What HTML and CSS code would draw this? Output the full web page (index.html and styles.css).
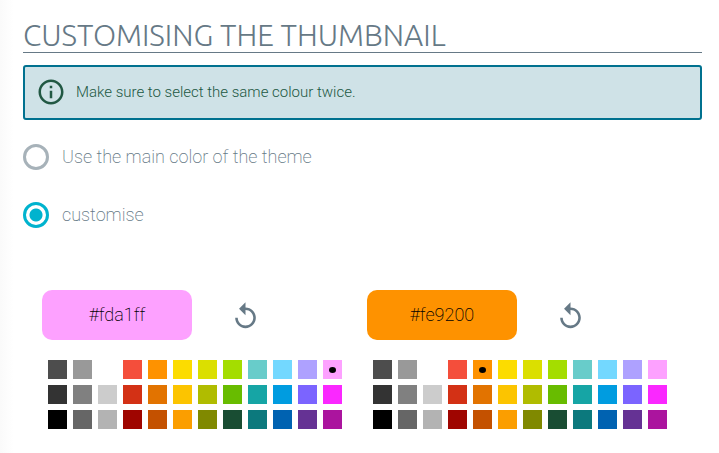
FILE: index.html
```html
<!DOCTYPE html>
<html lang="en">
<head>
    <meta charset="UTF-8">
    <meta name="viewport" content="width=device-width, initial-scale=1.0">
    <title>Customising the thumbnail</title>
    <link rel="stylesheet" href="styles.css">
</head>
<body>

    <main class="page">
        <h1 class="title">CUSTOMISING THE THUMBNAIL</h1>

        <div class="alert" role="note">
            <svg class="alert-icon" viewBox="0 0 24 24" aria-hidden="true">
                <path d="M11 7h2v2h-2zm0 4h2v6h-2zm1-9C6.48 2 2 6.48 2 12s4.48 10 10 10 10-4.48 10-10S17.52 2 12 2zm0 18c-4.41 0-8-3.59-8-8s3.59-8 8-8 8 3.59 8 8-3.59 8-8 8z"/>
            </svg>
            <p>Make sure to select the same colour twice.</p>
        </div>

        <form id="thumbnailForm">
            <div class="options">
                <label class="option" for="mainColor">
                    <input type="radio" id="mainColor" name="mode" value="theme">
                    <span>Use the main color of the theme</span>
                </label>
                <label class="option" for="customColor">
                    <input type="radio" id="customColor" name="mode" value="custom" checked>
                    <span>customise</span>
                </label>
            </div>

            <div class="pickers">
                <div class="picker" data-default="#fda1ff">
                    <div class="picker-head">
                        <output class="preview">#fda1ff</output>
                        <button type="button" class="reset" aria-label="Reset colour">
                            <svg viewBox="0 0 24 24" aria-hidden="true">
                                <path d="M12 5V1L7 6l5 5V7c3.31 0 6 2.69 6 6s-2.69 6-6 6-6-2.69-6-6H4c0 4.42 3.58 8 8 8s8-3.58 8-8-3.58-8-8-8z"/>
                            </svg>
                        </button>
                    </div>
                    <div class="swatches"></div>
                </div>
                <div class="picker" data-default="#fe9200">
                    <div class="picker-head">
                        <output class="preview">#fe9200</output>
                        <button type="button" class="reset" aria-label="Reset colour">
                            <svg viewBox="0 0 24 24" aria-hidden="true">
                                <path d="M12 5V1L7 6l5 5V7c3.31 0 6 2.69 6 6s-2.69 6-6 6-6-2.69-6-6H4c0 4.42 3.58 8 8 8s8-3.58 8-8-3.58-8-8-8z"/>
                            </svg>
                        </button>
                    </div>
                    <div class="swatches"></div>
                </div>
            </div>
        </form>
    </main>

    <script>
        // Palette, one line per row of swatches
        const colors = [
            '#4d4d4d', '#999999', '#ffffff', '#f44e3b', '#fe9200', '#fcdc00', '#dbdf00', '#a4dd00', '#68ccca', '#73d8ff', '#aea1ff', '#fda1ff',
            '#333333', '#808080', '#cccccc', '#d33115', '#e27300', '#fcc400', '#b0bc00', '#68bc00', '#16a5a5', '#009ce0', '#7b64ff', '#fa28ff',
            '#000000', '#666666', '#b3b3b3', '#9f0500', '#c45100', '#fb9e00', '#808900', '#194d33', '#0c797d', '#0062b1', '#653294', '#ab149e'
        ];

        document.querySelectorAll('.picker').forEach(function(picker) {
            const swatches = picker.querySelector('.swatches');
            const preview = picker.querySelector('.preview');

            colors.forEach(function(color) {
                const button = document.createElement('button');
                button.type = 'button';
                button.className = 'swatch';
                button.dataset.color = color;
                button.style.backgroundColor = color;
                button.setAttribute('aria-label', color);
                button.addEventListener('click', function() {
                    selectColor(color);
                });
                swatches.appendChild(button);
            });

            function selectColor(color) {
                preview.textContent = color;
                preview.style.backgroundColor = color;
                swatches.querySelectorAll('.swatch').forEach(function(swatch) {
                    swatch.classList.toggle('selected', swatch.dataset.color === color);
                });
            }

            picker.querySelector('.reset').addEventListener('click', function() {
                selectColor(picker.dataset.default);
            });

            selectColor(picker.dataset.default);
        });
    </script>

</body>
</html>
```
FILE: styles.css
```css
/* General reset */
* {
    margin: 0;
    padding: 0;
    box-sizing: border-box;
}

body {
    min-height: 100vh;
    font-family: Roboto, "Liberation Sans", sans-serif;
    font-weight: 200;
    color: #667986;
    background: linear-gradient(to right, #fafafa, #ffffff 14px);
}

.page {
    padding: 19px 17px 20px 23px;
}

.title {
    font-family: Ubuntu, "Open Sans", sans-serif;
    font-size: 30px;
    font-weight: 300;
    line-height: 33px;
    border-bottom: 1px solid #667986;
    margin-bottom: 12px;
}

.alert {
    display: flex;
    align-items: center;
    gap: 10px;
    padding: 10px 11px 11px;
    border: 2px solid #00718f;
    border-radius: 3px;
    background-color: #cfe2e7;
    color: #215843;
    font-size: 15px;
    font-weight: 300;
    line-height: 20px;
}

.alert-icon {
    width: 30px;
    height: 30px;
    fill: currentColor;
}

.options {
    display: flex;
    flex-direction: column;
    align-items: flex-start;
    gap: 32px;
    padding: 24px 0 62px;
}

.option {
    display: flex;
    align-items: center;
    gap: 13px;
    font-size: 18px;
    line-height: 24px;
    cursor: pointer;
}

.option input {
    appearance: none;
    width: 26px;
    height: 26px;
    border: 3px solid #a7b2b9;
    border-radius: 50%;
    background-color: white;
    cursor: pointer;
}

.option input:checked {
    border-color: #00b3ce;
    background: radial-gradient(circle, #00b3ce 6px, white 7px);
}

.pickers {
    display: flex;
    flex-wrap: wrap;
    gap: 20px 25px;
    padding-left: 19px;
}

.picker {
    width: 300px;
}

.picker-head {
    display: flex;
    align-items: center;
    gap: 38px;
    margin-bottom: 20px;
}

.preview {
    width: 150px;
    padding: 13px 0;
    border-radius: 10px;
    color: black;
    font-size: 18px;
    line-height: 24px;
    text-align: center;
}

.reset {
    padding-top: 3px;
    border: none;
    background: none;
    cursor: pointer;
}

.reset svg {
    display: block;
    width: 31px;
    height: 31px;
    fill: #667986;
}

.swatches {
    display: grid;
    grid-template-columns: repeat(12, 19px);
    gap: 6px;
    padding-left: 6px;
}

.swatch {
    display: flex;
    align-items: center;
    justify-content: center;
    height: 19px;
    border: none;
    cursor: pointer;
}

.swatch.selected::after {
    content: "";
    width: 7px;
    height: 6px;
    border-radius: 50%;
    background-color: black;
}
```
